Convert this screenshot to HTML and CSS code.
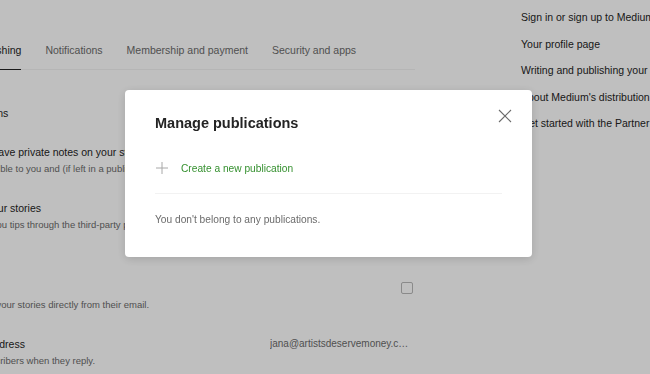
FILE: index.html
```html
<!DOCTYPE html>
<html lang="en">
<head>
    <meta charset="UTF-8">
    <meta name="viewport" content="width=device-width, initial-scale=1.0">
    <title>Settings - Publishing</title>
    <link rel="stylesheet" href="styles.css">
</head>
<body>
    <div class="page">
        <main class="settings">
            <nav class="tabs">
                <a class="tab">Account</a>
                <a class="tab active">Publishing</a>
                <a class="tab">Notifications</a>
                <a class="tab">Membership and payment</a>
                <a class="tab">Security and apps</a>
            </nav>

            <section class="rows">
                <div class="row">
                    <div class="row-text">
                        <div class="row-title">Manage publications</div>
                    </div>
                </div>
                <div class="row">
                    <div class="row-text">
                        <div class="row-title">Allow readers to leave private notes on your stories</div>
                        <div class="row-sub">Private notes are visible to you and (if left in a publication) all Editors of the publication.</div>
                    </div>
                </div>
                <div class="row row-tall">
                    <div class="row-text">
                        <div class="row-title">Manage tips on your stories</div>
                        <div class="row-sub">Readers can send you tips through the third-party platform Stripe.</div>
                    </div>
                </div>
                <div class="row">
                    <div class="row-text">
                        <div class="row-title">Allow email replies</div>
                        <div class="row-sub">Let readers reply to your stories directly from their email.</div>
                    </div>
                    <span class="checkbox"></span>
                </div>
                <div class="row">
                    <div class="row-text">
                        <div class="row-title">'Reply To' email address</div>
                        <div class="row-sub">Shown to your subscribers when they reply.</div>
                    </div>
                    <span class="email">jana@artistsdeservemoney.com</span>
                </div>
            </section>
        </main>

        <aside class="sidebar">
            <a>Sign in or sign up to Medium</a>
            <a>Your profile page</a>
            <a>Writing and publishing your story</a>
            <a>About Medium's distribution system</a>
            <a>Get started with the Partner Program</a>
        </aside>
    </div>

    <div class="overlay"></div>

    <div class="modal">
        <button class="close" aria-label="Close">
            <svg width="14" height="14" viewBox="0 0 14 14"><path d="M1 1 13 13M13 1 1 13" stroke="#6b6b6b" stroke-width="1.1" fill="none"/></svg>
        </button>
        <h2 class="modal-title">Manage publications</h2>
        <a class="create">
            <svg width="12" height="12" viewBox="0 0 12 12"><path d="M6 0v12M0 6h12" stroke="#a8a8a8" stroke-width="1" fill="none"/></svg>
            <span>Create a new publication</span>
        </a>
        <div class="divider"></div>
        <p class="empty">You don't belong to any publications.</p>
    </div>
</body>
</html>
```

FILE: styles.css
```css
body {
    margin: 0;
    font-family: "Liberation Sans", Arial, sans-serif;
    background-color: #ffffff;
    color: #242424;
    overflow: hidden;
}
a {
    cursor: pointer;
}
.page {
    display: flex;
    height: 374px;
}
.settings {
    flex: none;
    width: 503px;
    margin-left: -88px;
    padding-top: 42px;
}
.tabs {
    display: flex;
    gap: 24px;
    margin-left: -1px;
    border-bottom: 1px solid #f2f2f2;
}
.tab {
    font-size: 10.5px;
    line-height: 16px;
    color: #6b6b6b;
    padding-bottom: 11px;
    margin-bottom: -1px;
    border-bottom: 1px solid transparent;
    white-space: nowrap;
}
.tab.active {
    color: #242424;
    border-bottom-color: #242424;
}
.rows {
    display: flex;
    flex-direction: column;
    gap: 23px;
    padding-top: 35px;
}
.row {
    display: flex;
    justify-content: space-between;
    align-items: flex-start;
}
.row-tall {
    margin-bottom: 24px;
}
.row-text {
    min-width: 0;
    white-space: nowrap;
}
.row-title {
    font-size: 10.5px;
    line-height: 16px;
    color: #242424;
}
.row-sub {
    font-size: 9.5px;
    line-height: 16px;
    margin-top: 1px;
    color: #6b6b6b;
}
.checkbox {
    flex: none;
    width: 10px;
    height: 10px;
    margin: 2px 2px 0 0;
    border: 1px solid #b8b8b8;
    border-radius: 2px;
}
.email {
    flex: none;
    width: 141px;
    margin-right: 4px;
    font-size: 10px;
    line-height: 16px;
    color: #6b6b6b;
    white-space: nowrap;
    overflow: hidden;
    text-overflow: ellipsis;
}
.sidebar {
    flex: none;
    display: flex;
    flex-direction: column;
    gap: 10.6px;
    margin-left: 106px;
    padding-top: 9px;
    white-space: nowrap;
}
.sidebar a {
    font-size: 10.5px;
    line-height: 16px;
    color: #242424;
}
.overlay {
    position: fixed;
    inset: 0;
    background-color: rgba(0, 0, 0, 0.25);
}
.modal {
    position: fixed;
    left: 125px;
    top: 90px;
    width: 347px;
    padding: 23px 30px 29px;
    background-color: #ffffff;
    border-radius: 4px;
    box-shadow: 0 2px 10px rgba(0, 0, 0, 0.15);
}
.close {
    position: absolute;
    top: 19px;
    right: 20px;
    padding: 0;
    border: none;
    background: none;
    line-height: 0;
    cursor: pointer;
}
.modal-title {
    margin: 0;
    font-size: 14.5px;
    line-height: 20px;
    font-weight: 700;
    color: #242424;
}
.create {
    display: flex;
    align-items: center;
    gap: 13px;
    margin-top: 25px;
    height: 20px;
    padding-left: 1px;
    font-size: 10.2px;
    color: #35902f;
}
.divider {
    margin-top: 15px;
    border-top: 1px solid #f2f2f2;
}
.empty {
    margin: 18px 0 0;
    font-size: 10.2px;
    line-height: 16px;
    color: #6b6b6b;
}
```
